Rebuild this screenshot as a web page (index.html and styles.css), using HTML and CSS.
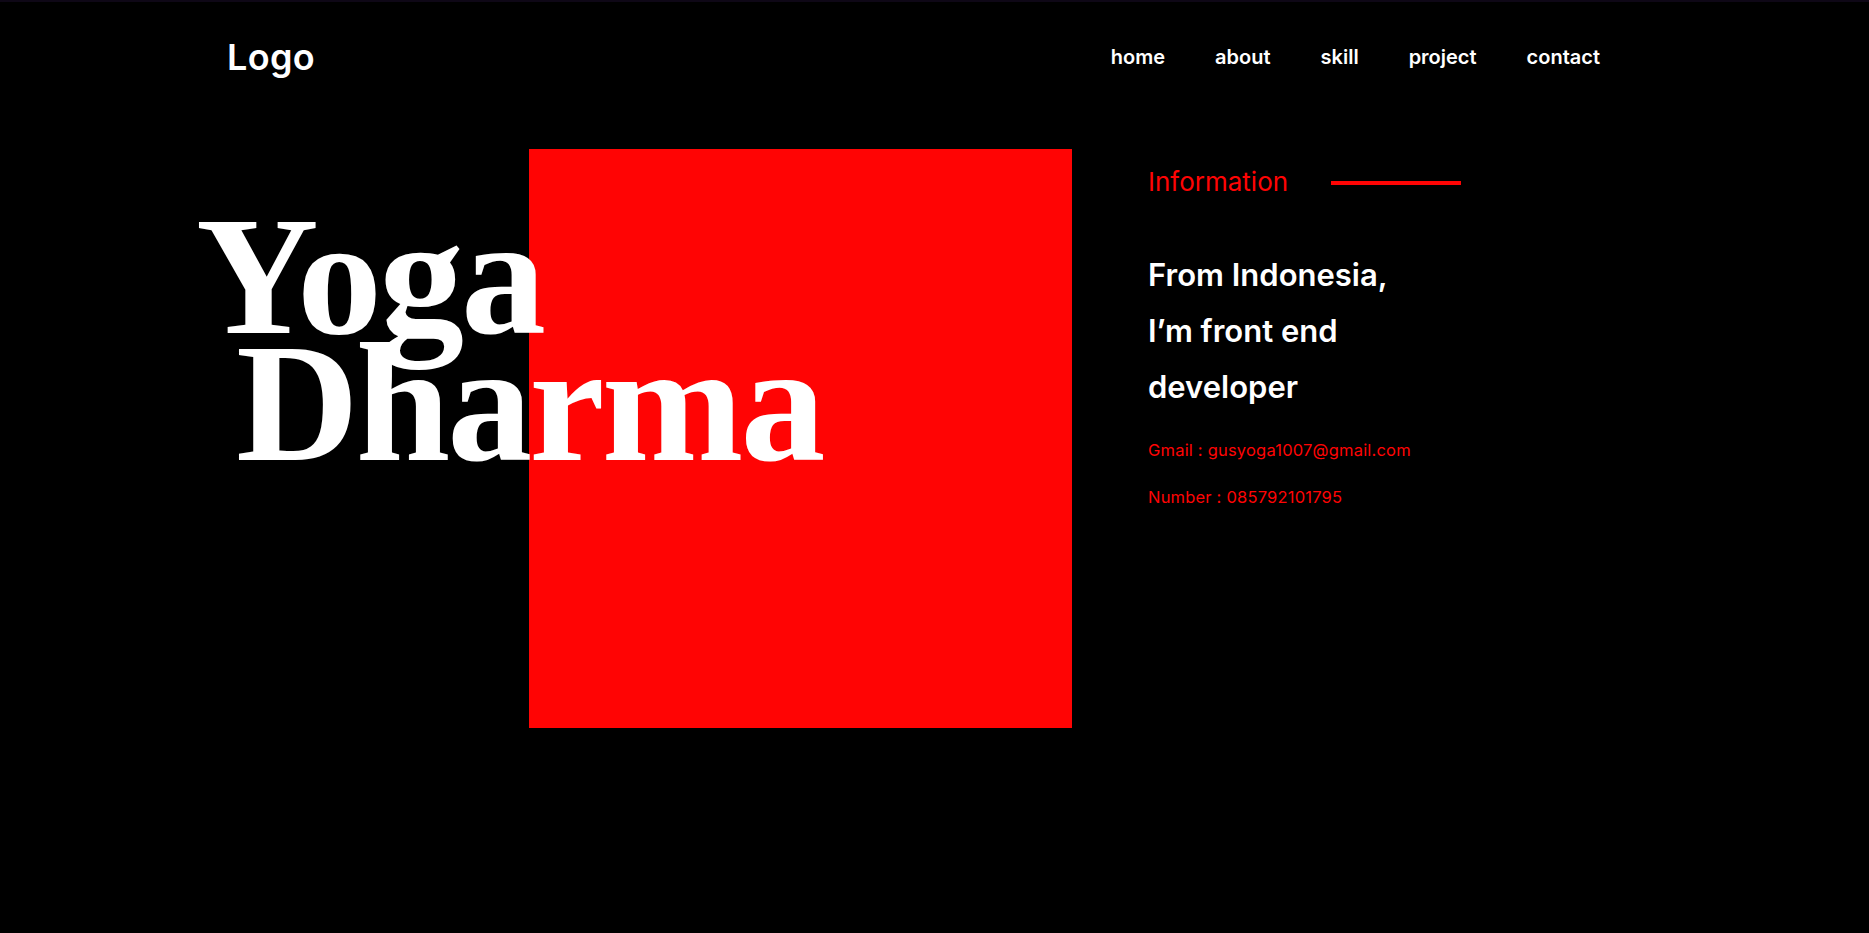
FILE: index.html
```html
<!DOCTYPE html>
<html lang="en">
<head>
<meta charset="utf-8">
<title>Yoga Dharma</title>
<link rel="stylesheet" href="styles.css">
</head>
<body>
<div class="home">
  <header class="header">
    <a class="logo" href="#">Logo</a>
    <nav class="nav">
      <a href="#home">home</a>
      <a href="#about">about</a>
      <a href="#skill">skill</a>
      <a href="#project">project</a>
      <a href="#contact">contact</a>
    </nav>
  </header>
  <main class="hero">
    <div class="visual">
      <div class="box"></div>
      <h1 class="title"><span class="line">Yoga</span><span class="line indent">Dharma</span></h1>
    </div>
    <aside class="info">
      <div class="info-head">
        <span class="info-label">Information</span>
        <span class="info-rule"></span>
      </div>
      <p class="info-text">From Indonesia, I’m front end developer</p>
      <p class="info-contact">Gmail : gusyoga1007@gmail.com</p>
      <p class="info-contact">Number : 085792101795</p>
    </aside>
  </main>
</div>
<section class="section" id="about"></section>
<section class="section" id="skill"></section>
<section class="section" id="project"></section>
<section class="section" id="contact"></section>
<footer class="section"></footer>
</body>
</html>
```
FILE: styles.css
```css
* { box-sizing: border-box; }

html {
  overflow-y: scroll;
}

html, body {
  margin: 0;
  padding: 0;
  background: #000;
}

::-webkit-scrollbar {
  width: 17px;
}

::-webkit-scrollbar-track {
  background: #f1f1f1;
}

::-webkit-scrollbar-thumb {
  background: #c1c1c1;
}

body {
  border-top: 2px solid #0e0716;
  color: #fff;
  font-family: "Inter", "Open Sans", sans-serif;
}

.home {
  min-height: calc(100vh - 2px);
}

.header {
  height: 110px;
  display: flex;
  align-items: center;
  justify-content: space-between;
  padding: 0 244px 0 227px;
}

.logo {
  color: #fff;
  text-decoration: none;
  font-size: 36px;
  font-weight: 600;
  letter-spacing: 0.3px;
}

.nav {
  display: flex;
}

.nav a {
  color: #fff;
  text-decoration: none;
  font-size: 20px;
  font-weight: 600;
  padding: 0 25px;
}

.hero {
  display: flex;
  align-items: flex-start;
  padding: 37px 0 0 196px;
}

.visual {
  display: grid;
  grid-template-columns: 333px 543px;
}

.box {
  grid-column: 2;
  grid-row: 1;
  height: 579px;
  background: #ff0404;
}

.title {
  grid-column: 1 / -1;
  grid-row: 1;
  margin: 64px 0 0;
  font-family: "Liberation Serif", "Times New Roman", serif;
  font-weight: 700;
  font-size: 170px;
  line-height: 127px;
  letter-spacing: -3px;
  color: #fff;
}

.line {
  display: block;
}

.indent {
  padding-left: 40px;
}

.info {
  margin-left: 76px;
  padding-top: 15px;
  display: flex;
  flex-direction: column;
}

.info-head {
  display: flex;
  align-items: center;
  gap: 43px;
  height: 36px;
}

.info-label {
  color: #ff0404;
  font-size: 26px;
  line-height: 36px;
}

.info-rule {
  width: 130px;
  height: 4px;
  background: #ff0404;
  margin-top: 2px;
}

.info-text {
  width: 280px;
  margin: 47px 0 0;
  font-size: 31px;
  font-weight: 600;
  line-height: 56px;
}

.info-contact {
  margin: 23px 0 0;
  color: #ff0404;
  font-size: 16.5px;
  letter-spacing: 0.2px;
  line-height: 24px;
}

.section {
  min-height: 100vh;
}
```
